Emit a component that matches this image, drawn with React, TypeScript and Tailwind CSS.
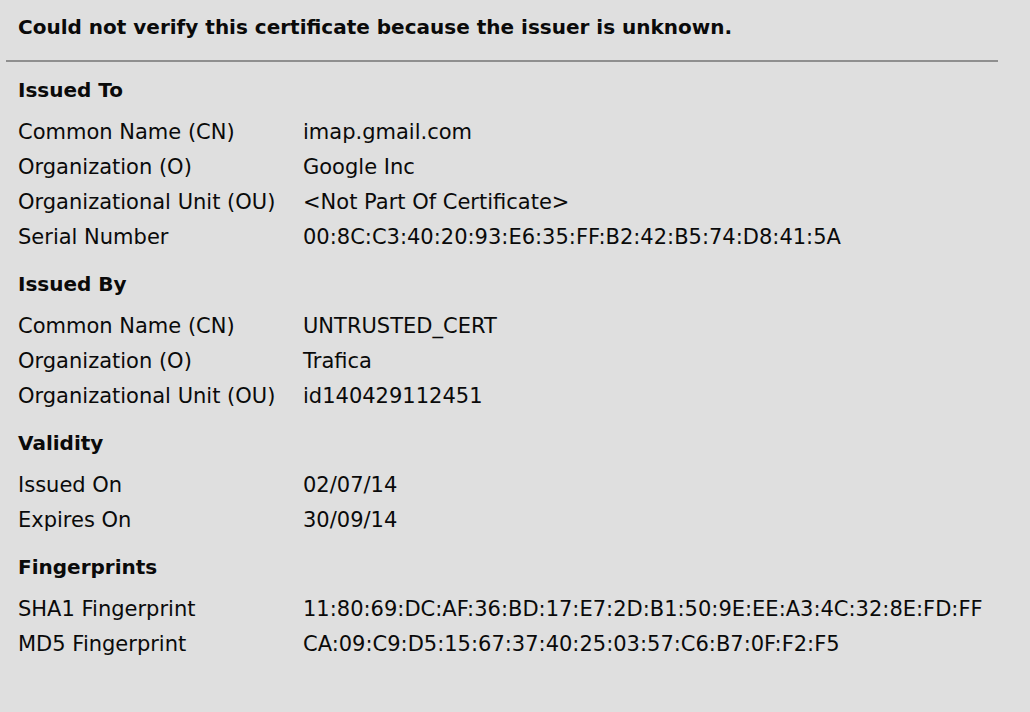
const sections: { title: string; rows: [string, string][] }[] = [
  {
    title: 'Issued To',
    rows: [
      ['Common Name (CN)', 'imap.gmail.com'],
      ['Organization (O)', 'Google Inc'],
      ['Organizational Unit (OU)', '<Not Part Of Certificate>'],
      ['Serial Number', '00:8C:C3:40:20:93:E6:35:FF:B2:42:B5:74:D8:41:5A'],
    ],
  },
  {
    title: 'Issued By',
    rows: [
      ['Common Name (CN)', 'UNTRUSTED_CERT'],
      ['Organization (O)', 'Trafica'],
      ['Organizational Unit (OU)', 'id140429112451'],
    ],
  },
  {
    title: 'Validity',
    rows: [
      ['Issued On', '02/07/14'],
      ['Expires On', '30/09/14'],
    ],
  },
  {
    title: 'Fingerprints',
    rows: [
      ['SHA1 Fingerprint', '11:80:69:DC:AF:36:BD:17:E7:2D:B1:50:9E:EE:A3:4C:32:8E:FD:FF'],
      ['MD5 Fingerprint', 'CA:09:C9:D5:15:67:37:40:25:03:57:C6:B7:0F:F2:F5'],
    ],
  },
];

export default function App() {
  return (
    <div className="h-[712px] w-[1030px] overflow-hidden bg-[#dfdfdf] text-[21px] text-[#0a0a0a] font-['DejaVu_Sans',sans-serif]">
      {/* Header */}
      <div className="h-[54px] px-[18px] flex items-center font-bold text-[20px]">
        Could not verify this certificate because the issuer is unknown.
      </div>
      <div className="mt-[6px] ml-[6px] w-[992px] h-[2px] bg-[#8f8f8f]" />

      {/* Details */}
      <div className="mt-[10px] px-[18px]">
        {sections.map((section, i) => (
          <div key={section.title} className={i > 0 ? 'mt-[11px]' : ''}>
            <div className="h-[35px] flex items-center font-bold text-[20px]">{section.title}</div>
            <div className="mt-[8px]">
              {section.rows.map(([label, value]) => (
                <div key={label} className="h-[35px] flex items-center">
                  <span className="w-[285px] shrink-0">{label}</span>
                  <span>{value}</span>
                </div>
              ))}
            </div>
          </div>
        ))}
      </div>
    </div>
  );
}
